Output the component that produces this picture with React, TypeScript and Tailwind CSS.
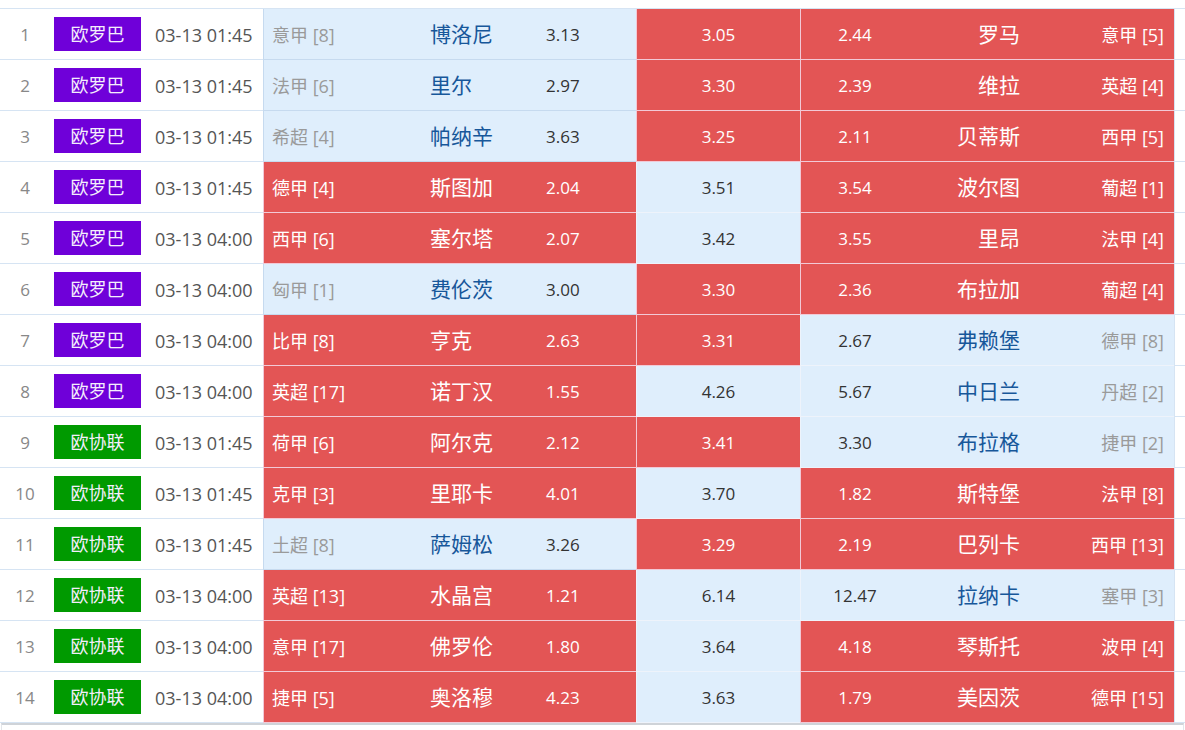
import React from "react";

type Row = {
  cup: "el" | "ecl";
  time: string;
  hl: string;
  home: string;
  ho: string;
  draw: string;
  ao: string;
  away: string;
  al: string;
  // 红色高亮: 主 / 平 / 客
  hot: [boolean, boolean, boolean];
};

const ROWS: Row[] = [
  { cup: "el", time: "03-13 01:45", hl: "意甲 [8]", home: "博洛尼", ho: "3.13", draw: "3.05", ao: "2.44", away: "罗马", al: "意甲 [5]", hot: [false, true, true] },
  { cup: "el", time: "03-13 01:45", hl: "法甲 [6]", home: "里尔", ho: "2.97", draw: "3.30", ao: "2.39", away: "维拉", al: "英超 [4]", hot: [false, true, true] },
  { cup: "el", time: "03-13 01:45", hl: "希超 [4]", home: "帕纳辛", ho: "3.63", draw: "3.25", ao: "2.11", away: "贝蒂斯", al: "西甲 [5]", hot: [false, true, true] },
  { cup: "el", time: "03-13 01:45", hl: "德甲 [4]", home: "斯图加", ho: "2.04", draw: "3.51", ao: "3.54", away: "波尔图", al: "葡超 [1]", hot: [true, false, true] },
  { cup: "el", time: "03-13 04:00", hl: "西甲 [6]", home: "塞尔塔", ho: "2.07", draw: "3.42", ao: "3.55", away: "里昂", al: "法甲 [4]", hot: [true, false, true] },
  { cup: "el", time: "03-13 04:00", hl: "匈甲 [1]", home: "费伦茨", ho: "3.00", draw: "3.30", ao: "2.36", away: "布拉加", al: "葡超 [4]", hot: [false, true, true] },
  { cup: "el", time: "03-13 04:00", hl: "比甲 [8]", home: "亨克", ho: "2.63", draw: "3.31", ao: "2.67", away: "弗赖堡", al: "德甲 [8]", hot: [true, true, false] },
  { cup: "el", time: "03-13 04:00", hl: "英超 [17]", home: "诺丁汉", ho: "1.55", draw: "4.26", ao: "5.67", away: "中日兰", al: "丹超 [2]", hot: [true, false, false] },
  { cup: "ecl", time: "03-13 01:45", hl: "荷甲 [6]", home: "阿尔克", ho: "2.12", draw: "3.41", ao: "3.30", away: "布拉格", al: "捷甲 [2]", hot: [true, true, false] },
  { cup: "ecl", time: "03-13 01:45", hl: "克甲 [3]", home: "里耶卡", ho: "4.01", draw: "3.70", ao: "1.82", away: "斯特堡", al: "法甲 [8]", hot: [true, false, true] },
  { cup: "ecl", time: "03-13 01:45", hl: "土超 [8]", home: "萨姆松", ho: "3.26", draw: "3.29", ao: "2.19", away: "巴列卡", al: "西甲 [13]", hot: [false, true, true] },
  { cup: "ecl", time: "03-13 04:00", hl: "英超 [13]", home: "水晶宫", ho: "1.21", draw: "6.14", ao: "12.47", away: "拉纳卡", al: "塞甲 [3]", hot: [true, false, false] },
  { cup: "ecl", time: "03-13 04:00", hl: "意甲 [17]", home: "佛罗伦", ho: "1.80", draw: "3.64", ao: "4.18", away: "琴斯托", al: "波甲 [4]", hot: [true, false, true] },
  { cup: "ecl", time: "03-13 04:00", hl: "捷甲 [5]", home: "奥洛穆", ho: "4.23", draw: "3.63", ao: "1.79", away: "美因茨", al: "德甲 [15]", hot: [true, false, true] },
];

const blockCls = (hot: boolean) =>
  hot
    ? "bg-[#e35555] border-b border-[#f2c9d6] text-white"
    : "bg-[#dfeefc] border-b border-[#c6daef]";

export default function App() {
  return (
    <div className="w-[1185px] h-[730px] overflow-hidden bg-white font-['Open_Sans','Noto_Sans_CJK_SC',sans-serif]">
      <div className="h-[9px] border-b border-[#d6e4f3]" />

      {ROWS.map((r, i) => (
        <div key={i} className="flex h-[51px] text-[17px]">
          {/* 序号 / 赛事 / 时间 */}
          <div className="w-[50px] flex items-center justify-center pt-[2px] text-[#888] border-b border-[#d6e4f3]">
            {i + 1}
          </div>
          <div className="w-[100px] flex items-center pl-[4px] border-b border-[#d6e4f3]">
            <span
              className={`w-[87px] h-[34px] flex items-center justify-center text-[18px] text-[#f4eefc] ${
                r.cup === "el" ? "bg-[#6f00d9]" : "bg-[#009a00]"
              }`}
            >
              {r.cup === "el" ? "欧罗巴" : "欧协联"}
            </span>
          </div>
          <div className="w-[113px] flex items-center pl-[5px] pt-[2px] text-[18px] text-[#555] border-b border-[#d6e4f3]">
            {r.time}
          </div>

          {/* 主队 */}
          <div className={`w-[373px] flex items-center pt-[2px] border-l border-[#c6daef] ${blockCls(r.hot[0])}`}>
            <span className={`w-[166px] pl-[8px] text-[18px] ${r.hot[0] ? "" : "text-[#9a9a9a]"}`}>{r.hl}</span>
            <span className={`w-[116px] text-[21px] ${r.hot[0] ? "" : "text-[#17579a]"}`}>{r.home}</span>
            <span className={r.hot[0] ? "" : "text-[#333]"}>{r.ho}</span>
          </div>

          {/* 平 */}
          <div className={`w-[164px] flex items-center justify-center pt-[2px] border-l border-[#eef3fb] ${blockCls(r.hot[1])}`}>
            <span className={r.hot[1] ? "" : "text-[#333]"}>{r.draw}</span>
          </div>

          {/* 客队 */}
          <div className={`w-[374px] flex items-center pt-[2px] border-l border-[#eef3fb] ${blockCls(r.hot[2])}`}>
            <span className={`w-[108px] text-center ${r.hot[2] ? "" : "text-[#333]"}`}>{r.ao}</span>
            <span className={`w-[111px] text-right text-[21px] ${r.hot[2] ? "" : "text-[#17579a]"}`}>{r.away}</span>
            <span className={`flex-1 text-right pr-[10px] text-[18px] ${r.hot[2] ? "" : "text-[#9a9a9a]"}`}>{r.al}</span>
          </div>

          <div className="flex-1 border-l border-[#d6e4f3] border-b border-b-[#d6e4f3]" />
        </div>
      ))}

      <div className="mx-[1px] h-[10px] border-t-2 border-[#cfd3d8] border-x border-x-[#e3e6ea]" />
    </div>
  );
}
